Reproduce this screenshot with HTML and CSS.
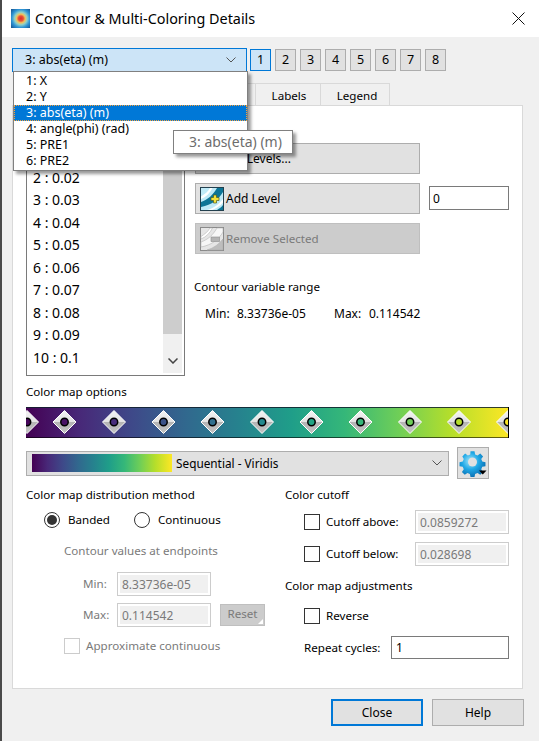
FILE: index.html
```html
<!DOCTYPE html>
<html lang="en">
<head>
<meta charset="utf-8">
<title>Contour &amp; Multi-Coloring Details</title>
<link rel="stylesheet" href="styles.css">
</head>
<body>
<svg class="defs" width="0" height="0" aria-hidden="true">
  <defs>
    <linearGradient id="viridis" x1="0" x2="1" y1="0" y2="0">
      <stop offset="0" stop-color="#440154"/><stop offset=".11" stop-color="#482878"/><stop offset=".22" stop-color="#3e4989"/>
      <stop offset=".33" stop-color="#31688e"/><stop offset=".44" stop-color="#26828e"/><stop offset=".55" stop-color="#1f9e89"/>
      <stop offset=".66" stop-color="#35b779"/><stop offset=".77" stop-color="#6ece58"/><stop offset=".88" stop-color="#b5de2b"/>
      <stop offset="1" stop-color="#fde725"/>
    </linearGradient>
    <linearGradient id="mk" x1="0" x2="0" y1="0" y2="1">
      <stop offset="0" stop-color="#f4f4f4"/><stop offset=".5" stop-color="#e2e2e2"/><stop offset=".5" stop-color="#b4b4b4"/><stop offset="1" stop-color="#c4c4c4"/>
    </linearGradient>
    <radialGradient id="gear" cx=".42" cy=".38" r=".65">
      <stop offset="0" stop-color="#a5e8fc"/><stop offset=".5" stop-color="#1fa8e6"/><stop offset="1" stop-color="#0a6cb0"/>
    </radialGradient>
    <radialGradient id="app" cx=".52" cy=".5" r=".66">
      <stop offset="0" stop-color="#dd2c25"/><stop offset=".2" stop-color="#e8503a"/><stop offset=".34" stop-color="#f2c25a"/><stop offset=".5" stop-color="#8fd0c8"/><stop offset=".72" stop-color="#2f95d6"/><stop offset="1" stop-color="#1a5f9c"/>
    </radialGradient>
    <g id="marker">
      <path d="M0-11.500 11.500 0 0 11.500-11.500 0Z" fill="url(#mk)" stroke="#fff" stroke-width="1"/>
    </g>
    <g id="band-icon">
      <rect x=".5" y=".5" width="23" height="23" fill="#bfeaf7" stroke="#23404e"/>
      <path d="M1 9.500C5 7 8 4.500 10 1h2.500C10 6 6 10 1 12Z" fill="#fff"/>
      <path d="M1 15C8 12.500 13 8 17 1h6v4C19 12 12 18 1 20Z" fill="#0d7596"/>
      <path d="M7 23c7-2 12-6 16-11v3.500C20 19 16 21.500 12 23Z" fill="#fff"/>
      <path d="M17 23c2.500-1.500 4.500-3 6-5v5Z" fill="#0d7596"/>
    </g>
  </defs>
</svg>
<div class="window">
  <header class="titlebar">
    <svg class="app-icon" viewBox="0 0 19 19" aria-hidden="true"><rect width="19" height="19" fill="url(#app)"/></svg>
    <h1 class="title">Contour &amp; Multi-Coloring Details</h1>
    <svg class="close-x" viewBox="0 0 13 13" aria-hidden="true"><path d="M.5.500l12 12M12.500.500l-12 12" stroke="#111" stroke-width="1" fill="none"/></svg>
  </header>

  <main class="content">
    <div class="var-row">
      <div class="var-combo">
        <span>3: abs(eta) (m)</span>
        <svg class="chev" viewBox="0 0 10 6" aria-hidden="true"><path d="M.5.500 5 5 9.500.500" fill="none" stroke="#555"/></svg>
      </div>
      <div class="nums">
        <button class="num num-on">1</button><button class="num">2</button><button class="num">3</button><button class="num">4</button><button class="num">5</button><button class="num">6</button><button class="num">7</button><button class="num">8</button>
      </div>
    </div>

    <nav class="tabs">
      <span class="tab tab-a">Levels and Color</span>
      <span class="tab tab-b">Lines</span>
      <span class="tab tab-c">Labels</span>
      <span class="tab tab-d">Legend</span>
    </nav>

    <section class="panel">
      <div class="levels">
        <div class="level-list">
          <ul class="level-items">
            <li>1 : 0.01</li><li>2 : 0.02</li><li>3 : 0.03</li><li>4 : 0.04</li><li>5 : 0.05</li><li>6 : 0.06</li><li>7 : 0.07</li><li>8 : 0.08</li><li>9 : 0.09</li><li>10 : 0.1</li>
          </ul>
          <div class="scrollbar">
            <div class="thumb"></div>
            <svg class="chev scroll-chev" viewBox="0 0 10 6" aria-hidden="true"><path d="M.5.500 5 5 9.500.500" fill="none" stroke="#444" stroke-width="1.500"/></svg>
          </div>
        </div>
        <div class="level-tools">
          <button class="tool">
            <svg class="tool-icon" viewBox="0 0 24 24" aria-hidden="true"><use href="#band-icon"/></svg>
            <span>Set Levels...</span>
          </button>
          <div class="add-row">
            <button class="tool">
              <svg class="tool-icon" viewBox="0 0 24 24" aria-hidden="true">
                <use href="#band-icon"/>
                <path d="M13.500 8h3v2.500H19v3h-2.500V16h-3v-2.500H11v-3h2.500z" fill="#f5e23a" stroke="#4d5a1c" stroke-width=".7"/>
              </svg>
              <span>Add Level</span>
            </button>
            <input class="field level-input" value="0" aria-label="Level">
          </div>
          <button class="tool tool-off">
            <svg class="tool-icon" viewBox="0 0 24 24" aria-hidden="true">
              <rect x=".5" y=".5" width="23" height="23" fill="#e6e6e6" stroke="#8a8a8a"/>
              <path d="M1 9.500C5 7 8 4.500 10 1h2.500C10 6 6 10 1 12Z" fill="#fff" stroke="#a8a8a8" stroke-width=".5"/>
              <path d="M1 15C8 12.500 13 8 17 1h6v4C19 12 12 18 1 20Z" fill="#f7f7f7" stroke="#a8a8a8" stroke-width=".5"/>
              <path d="M7 23c7-2 12-6 16-11v11Z" fill="#bdbdbd" stroke="#a8a8a8" stroke-width=".5"/>
              <path d="M11 10h8.500v4.500H11z" fill="#b5b5b5" stroke="#8f8f8f" stroke-width=".6"/>
            </svg>
            <span>Remove Selected</span>
          </button>
          <h2 class="range-head">Contour variable range</h2>
          <div class="range-vals">
            <span class="r-l1">Min:</span><span class="r-v1">8.33736e-05</span><span class="r-l2">Max:</span><span>0.114542</span>
          </div>
        </div>
      </div>

      <h2 class="map-head">Color map options</h2>
      <svg class="map-bar" viewBox="0 0 483 31" aria-label="Color map" role="img">
        <rect width="483" height="31" fill="url(#viridis)"/>
        <path d="M0 .5H483" stroke="#10202c" stroke-opacity=".85"/>
        <path d="M0 30.500H483" stroke="#000" stroke-opacity=".6"/>
        <use href="#marker" x="1" y="15"/><circle cx="1" cy="15" r="3.700" fill="#450559" stroke="#000" stroke-width="1.500"/>
        <use href="#marker" x="38.500" y="15"/><circle cx="38.500" cy="15" r="3.700" fill="#471164" stroke="#000" stroke-width="1.500"/>
        <use href="#marker" x="88" y="15"/><circle cx="88" cy="15" r="3.700" fill="#472d7b" stroke="#000" stroke-width="1.500"/>
        <use href="#marker" x="137.500" y="15"/><circle cx="137.500" cy="15" r="3.700" fill="#3b5288" stroke="#000" stroke-width="1.500"/>
        <use href="#marker" x="186.500" y="15"/><circle cx="186.500" cy="15" r="3.700" fill="#2f6f8e" stroke="#000" stroke-width="1.500"/>
        <use href="#marker" x="236" y="15"/><circle cx="236" cy="15" r="3.700" fill="#23898e" stroke="#000" stroke-width="1.500"/>
        <use href="#marker" x="285.500" y="15"/><circle cx="285.500" cy="15" r="3.700" fill="#21a585" stroke="#000" stroke-width="1.500"/>
        <use href="#marker" x="334.500" y="15"/><circle cx="334.500" cy="15" r="3.700" fill="#35b779" stroke="#000" stroke-width="1.500"/>
        <use href="#marker" x="384" y="15"/><circle cx="384" cy="15" r="3.700" fill="#6ece58" stroke="#000" stroke-width="1.500"/>
        <use href="#marker" x="433" y="15"/><circle cx="433" cy="15" r="3.700" fill="#b5de2b" stroke="#000" stroke-width="1.500"/>
        <use href="#marker" x="482" y="15"/><circle cx="482" cy="15" r="3.700" fill="#fde725" stroke="#000" stroke-width="1.500"/>
        <path d="M482.500 0V31" stroke="#000"/>
      </svg>

      <div class="map-row">
        <div class="map-combo">
          <svg class="swatch" viewBox="0 0 140 18" preserveAspectRatio="none" aria-hidden="true"><rect width="140" height="18" fill="url(#viridis)"/></svg>
          <span class="map-name">Sequential - Viridis</span>
          <svg class="chev" viewBox="0 0 10 6" aria-hidden="true"><path d="M.5.500 5 5 9.500.500" fill="none" stroke="#555"/></svg>
        </div>
        <button class="gear-btn" aria-label="Color map settings">
          <svg class="gear" viewBox="0 0 30 30" aria-hidden="true">
            <path d="M12.500 1.500h5l.8 4 3 1.300 3.400-2.300 3.500 3.500-2.300 3.400 1.300 3 4 .8v5l-4 .8-1.300 3 2.300 3.400-3.500 3.500-3.400-2.300-3 1.300-.8 4h-5l-.8-4-3-1.300-3.400 2.300-3.500-3.500 2.300-3.400-1.300-3-4-.8v-5l4-.8 1.300-3L2.300 8 5.800 4.500l3.400 2.300 3-1.300z" transform="translate(2.500 2) scale(.8)" fill="url(#gear)"/>
            <circle cx="14.500" cy="14" r="4.500" fill="#e1e1e1"/>
            <path d="M21 22.500h7.500l-3.700 4z" fill="#000"/>
          </svg>
        </button>
      </div>

      <div class="options">
        <div class="opt-left">
          <h2 class="opt-head">Color map distribution method</h2>
          <div class="radios">
            <label class="radio-item"><span class="radio radio-on"></span>Banded</label>
            <label class="radio-item"><span class="radio"></span>Continuous</label>
          </div>
          <div class="off endpoints">Contour values at endpoints</div>
          <div class="end-row end-min">
            <span class="off end-label">Min:</span>
            <span class="field-off end-field">8.33736e-05</span>
          </div>
          <div class="end-row end-max">
            <span class="off end-label">Max:</span>
            <span class="field-off end-field">0.114542</span>
            <span class="reset">Reset<i class="corner"></i></span>
          </div>
          <label class="check-row approx"><span class="check check-off"></span><span class="off">Approximate continuous</span></label>
        </div>
        <div class="opt-right">
          <h2 class="opt-head">Color cutoff</h2>
          <div class="cut-row cut-a">
            <label class="check-row"><span class="check"></span>Cutoff above:</label>
            <span class="field-off cut-field">0.0859272</span>
          </div>
          <div class="cut-row cut-b">
            <label class="check-row"><span class="check"></span>Cutoff below:</label>
            <span class="field-off cut-field">0.028698</span>
          </div>
          <h2 class="opt-head adj-head">Color map adjustments</h2>
          <label class="check-row reverse"><span class="check"></span>Reverse</label>
          <div class="repeat">
            <span class="repeat-label">Repeat cycles:</span>
            <input class="field repeat-input" value="1" aria-label="Repeat cycles">
          </div>
        </div>
      </div>
    </section>

    <footer class="footer">
      <button class="foot-btn foot-main">Close</button>
      <button class="foot-btn">Help</button>
    </footer>
  </main>

  <ul class="dropdown">
    <li>1: X</li>
    <li>2: Y</li>
    <li class="dd-sel">3: abs(eta) (m)</li>
    <li>4: angle(phi) (rad)</li>
    <li>5: PRE1</li>
    <li>6: PRE2</li>
  </ul>
  <div class="tooltip">3: abs(eta) (m)</div>
</div>
</body>
</html>
```

FILE: styles.css
```css
* { box-sizing: border-box; }
html, body { margin: 0; padding: 0; }
body {
  width: 539px; height: 741px; overflow: hidden;
  background: #f0f0f0; color: #000;
  font: 11.6px/16px "Noto Sans", "Open Sans", sans-serif;
}
h1, h2, ul { margin: 0; padding: 0; font-weight: 400; font-size: inherit; }
ul { list-style: none; }
button { font: inherit; color: inherit; padding: 0; }
input { font: inherit; font-size: 12px; color: inherit; }
.defs { position: absolute; }

.window { position: relative; height: 741px; border-left: 2px solid #4a4a4a; display: flex; flex-direction: column; }

.titlebar { height: 37px; background: #fff; display: flex; align-items: center; padding: 0 14px 0 9px; }
.app-icon { width: 19px; height: 19px; }
.title { font-size: 14.400px; line-height: 22px; margin-left: 5px; flex: 1; }
.close-x { width: 13px; height: 13px; }

.content { padding: 11px 0 0 10px; width: 522px; }
.var-row { display: flex; align-items: center; height: 24px; }
.var-combo {
  width: 235px; height: 24px; border: 1px solid #0078d7; background: #cce4f7;
  font-size: 12.500px;
  display: flex; align-items: center; justify-content: space-between; padding: 0 10px 0 12px;
}
.chev { width: 10px; height: 6px; }
.nums { display: flex; gap: 4px; margin-left: 3px; }
.num { width: 21px; height: 22px; background: #e1e1e1; border: 1px solid #adadad; font-size: 12.500px; }
.num-on { background: #cce4f7; border-color: #0078d7; }

.tabs { display: flex; height: 23px; margin-top: 11px; padding-left: 1px; }
.tab { height: 23px; background: #f0f0f0; border: 1px solid #d9d9d9; border-bottom: 0; margin-left: -1px; display: flex; align-items: center; justify-content: center; padding-top: 1px; }
.tab-a { width: 130px; background: #fff; margin-left: 0; }
.tab-b { width: 114px; }
.tab-c { width: 66px; padding-left: 2px; }
.tab-d { width: 70px; padding-left: 4px; }

.panel { width: 511px; height: 584px; margin-top: -1px; background: #fff; border: 1px solid #d9d9d9; padding: 37px 13px 0; position: relative; }

.levels { display: flex; gap: 10px; }
.level-list { width: 159px; height: 233px; border: 1px solid #7a7a7a; display: flex; padding-left: 6px; }
.level-items { flex: 1; font-size: 14px; line-height: 22.500px; }
.scrollbar { width: 19px; margin-right: 2px; background: #f0f0f0; display: flex; flex-direction: column; height: 229px; }
.thumb { height: 190px; background: #cdcdcd; }
.scroll-chev { margin: 24px auto 0; }

.level-tools { width: 314px; }
.tool { width: 225px; height: 31px; background: #e1e1e1; border: 1px solid #adadad; display: flex; align-items: center; padding-left: 4px; margin-bottom: 9px; font-size: 12px; }
.tool-icon { width: 24px; height: 24px; margin-right: 2px; flex: none; }
.tool-off { background: #cccccc; border-color: #bfbfbf; color: #7a7a7a; margin-bottom: 0; font-size: 11.600px; }
.add-row { display: flex; align-items: flex-start; gap: 9px; }
.field { border: 1px solid #7a7a7a; background: #fff; padding: 0 0 0 3px; outline: 0; }
.level-input { width: 80px; height: 24px; margin-top: 3px; }
.range-head { margin: 25px 0 0 -1px; }
.range-vals { display: flex; margin-top: 11px; padding-left: 10px; font-size: 12px; }
.r-l1 { width: 32px; }
.r-v1 { width: 97px; }
.r-l2 { width: 35px; }

.map-head { margin-top: 8px; }
.map-bar { display: block; width: 483px; height: 31px; margin-top: 7px; }
.map-row { display: flex; align-items: center; gap: 8px; margin-top: 9px; height: 32px; }
.map-combo { width: 423px; height: 25px; background: #e1e1e1; border: 1px solid #adadad; display: flex; align-items: center; padding: 0 6px 0 5px; }
.swatch { width: 140px; height: 18px; flex: none; }
.map-name { flex: 1; margin-left: 4px; font-size: 11.800px; }
.gear-btn { width: 32px; height: 32px; background: #e1e1e1; border: 1px solid #adadad; display: flex; align-items: center; justify-content: center; }
.gear { width: 30px; height: 30px; }

.options { display: grid; grid-template-columns: 259px 1fr; margin-top: 7px; }
.opt-head { padding-top: 1px; height: 16px; }
.radios { display: flex; height: 20px; margin-top: 8px; padding-left: 18px; }
.radio-item { display: flex; align-items: center; width: 90px; }
.radio { width: 16px; height: 16px; border-radius: 50%; border: 1px solid #333; background: #fff; margin-right: 8px; position: relative; flex: none; display: flex; align-items: center; justify-content: center; }
.radio-on::after { content: ""; width: 10px; height: 10px; border-radius: 50%; background: #333; }
.off { color: #7a7a7a; }
.endpoints { margin: 13px 0 0 38px; }
.end-row { display: flex; align-items: center; padding-left: 57px; }
.end-min { margin-top: 13px; }
.end-max { margin-top: 7px; }
.end-label { width: 34px; }
.field-off { display: block; background: #f0f0f0; border: 1px solid #ccc; box-shadow: inset 0 0 0 2px #fff; color: #7a7a7a; padding: 4px 0 0 4px; font-size: 12px; }
.end-field { width: 94px; height: 24px; }
.reset { position: relative; width: 45px; height: 22px; margin-left: 9px; background: #ccc; color: #7a7a7a; border: 1px solid #bfbfbf; text-align: center; line-height: 18px; }
.corner { position: absolute; right: 1px; bottom: 1px; border-style: solid; border-width: 0 0 5px 5px; border-color: transparent transparent #fff transparent; }
.check-row { display: flex; align-items: center; }
.check { width: 16px; height: 16px; border: 1px solid #333; background: #fff; margin-right: 6px; flex: none; }
.check-off { border-color: #ccc; }
.approx { margin: 11px 0 0 38px; }

.cut-row { display: flex; align-items: center; padding-left: 19px; justify-content: space-between; width: 224px; }
.cut-a { margin-top: 8px; }
.cut-b { margin-top: 8px; }
.cut-field { width: 94px; height: 24px; }
.adj-head { margin-top: 12px; padding-top: 0; }
.reverse { margin: 14px 0 0 19px; }
.repeat { display: flex; align-items: center; margin: 12px 0 0 19px; }
.repeat-label { width: 87px; }
.repeat-input { width: 118px; height: 23px; padding-left: 4px; }

.footer { display: flex; justify-content: flex-end; gap: 9px; margin-top: 10px; }
.foot-btn { width: 92px; height: 27px; background: #e1e1e1; border: 1px solid #adadad; font-size: 12px; }
.foot-main { border: 2px solid #0078d7; }

.dropdown { position: absolute; left: 11px; top: 71px; width: 235px; height: 100px; background: #fff; border: 1px solid #808080; box-shadow: 3px 3px 3px rgba(0,0,0,.4); padding: 1px 0 0 0; font-size: 12.500px; }
.dropdown li { height: 16px; line-height: 16px; padding-left: 12px; }
.dropdown .dd-sel { background: #0078d7; color: #fff; outline: 1px dotted #f7a13a; outline-offset: -1px; }
.tooltip { position: absolute; left: 171px; top: 130px; width: 120px; height: 24px; background: #fff; border: 1px solid #808080; box-shadow: 3px 3px 3px rgba(0,0,0,.4); color: #6d6d6d; padding: 3px 0 0 15px; font-size: 14px; }
```
